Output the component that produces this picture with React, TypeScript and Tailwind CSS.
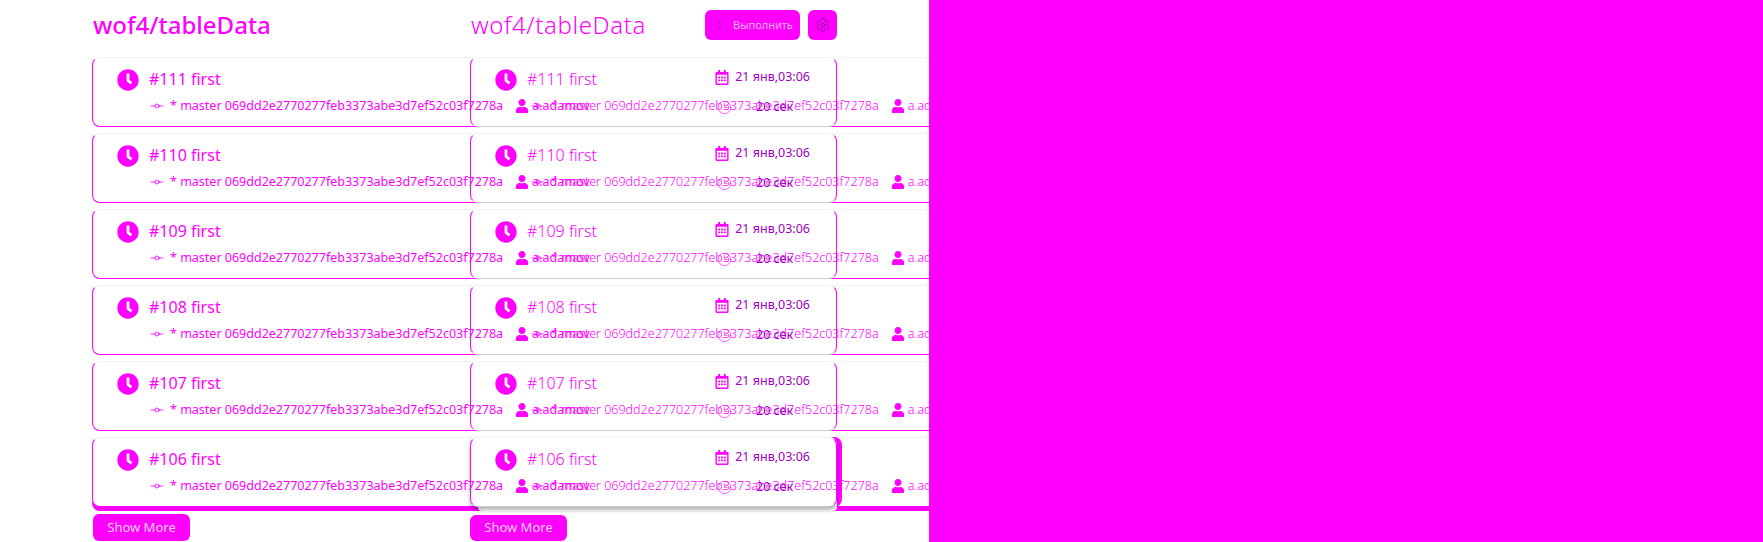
import { ChevronRight, Settings, Clock3, GitCommitHorizontal } from "lucide-react";
import { FaClock, FaRegCalendarAlt, FaUser } from "react-icons/fa";

const builds = [111, 110, 109, 108, 107, 106];
const hash = "069dd2e2770277feb3373abe3d7ef52c03f7278a";

function BuildCard({ id, wide, last }: { id: number; wide?: boolean; last?: boolean }) {
  const edges = wide
    ? "border-l-[#ff00ff] border-b-[#ff00ff] border-r-transparent border-t-[#f4f4f4]"
    : "border-l-[#ff00ff] border-r-[#ff00ff] border-b-[#cccccc] border-t-[#f4f4f4]";
  const shadow = !last
    ? ""
    : wide
      ? "shadow-[0_4px_0_#ff00ff]"
      : "shadow-[0_3px_4px_rgba(0,0,0,0.3),4px_8px_0_-4px_#ffffff,5px_0_0_#ff00ff]";

  return (
    <div className={`relative h-[70px] shrink-0 rounded-lg border pl-6 pt-[11px] ${edges} ${shadow}`}>
      <div className="flex items-center gap-2.5">
        <FaClock className="h-[22px] w-[22px] shrink-0 text-[#ff00ff]" />
        <span className={`-mt-[2px] text-[16px] leading-[22px] text-[#ff00ff] ${wide ? "font-normal" : "font-light"}`}>
          #{id} first
        </span>
        {!wide && (
          <span className="ml-auto mr-[26px] -mt-[5px] flex items-center gap-[6px] text-[12.5px] text-[#a000c0]">
            <FaRegCalendarAlt className="h-[15px] w-[14px] text-[#ff00ff]" />
            21 янв,03:06
          </span>
        )}
      </div>
      <div
        className={`mt-[5px] flex items-center whitespace-nowrap text-[12.5px] leading-[20px] text-[#ff00ff] ${
          wide ? "pl-[32px] font-normal" : "pl-[35px] font-light"
        }`}
      >
        <GitCommitHorizontal className="h-4 w-4 shrink-0" strokeWidth={1.25} />
        <span className="ml-[5px]">* master {hash}</span>
        <FaUser className="ml-3 mr-[3px] h-[14px] w-[14px] shrink-0" />
        <span>a.adamov</span>
      </div>
      {!wide && (
        <div className="absolute left-[246px] top-[39px] flex items-center gap-[6px] whitespace-nowrap text-[12.5px] leading-[20px] text-[#a000c0]">
          <Clock3 className="h-[15px] w-[15px] text-[#ff00ff]" strokeWidth={1} />
          <span className="ml-[18px]">20 сек</span>
        </div>
      )}
    </div>
  );
}

function BuildColumn({ wide }: { wide?: boolean }) {
  return (
    <div
      className={`col-start-1 row-start-1 flex flex-col ${
        wide ? "ml-[92px] w-[900px]" : "ml-[470px] w-[367px]"
      }`}
    >
      <div className="flex h-[57px] shrink-0 items-start justify-between pl-px">
        <h1
          className={`mt-[9px] text-[24px] leading-[32px] text-[#ff00ff] ${
            wide ? "font-medium" : "font-light tracking-[0.6px]"
          }`}
        >
          wof4/tableData
        </h1>
        {!wide && (
          <div className="mt-[10px] flex gap-2">
            <button className="flex h-[30px] w-[95px] items-center gap-[6px] rounded-md bg-[#ff00ff] pl-[6px] text-[11px] text-[#ffb0ff]">
              <ChevronRight className="h-4 w-4 text-[#80208f]" strokeWidth={1} />
              Выполнить
            </button>
            <button className="flex h-[30px] w-[29px] items-center justify-center rounded-md bg-[#ff00ff]">
              <Settings className="h-4 w-4 text-[#701080]" strokeWidth={1} />
            </button>
          </div>
        )}
      </div>
      <div className="flex flex-col gap-1.5">
        {builds.map((id) => (
          <BuildCard key={id} id={id} wide={wide} last={id === 106} />
        ))}
      </div>
      <button
        className={`w-[97px] shrink-0 rounded-md bg-[#ff00ff] text-[13px] text-[#ffd0ff] ${
          wide ? "ml-px mt-[7px] h-[27px]" : "mt-[8px] h-[26px]"
        }`}
      >
        Show More
      </button>
    </div>
  );
}

export default function App() {
  return (
    <div className="flex h-[542px] w-[1763px] overflow-hidden bg-[#ff00ff] font-['Noto_Sans',sans-serif]">
      <div className="grid h-[542px] w-[929px] overflow-hidden bg-white">
        <BuildColumn wide />
        <BuildColumn />
      </div>
    </div>
  );
}
